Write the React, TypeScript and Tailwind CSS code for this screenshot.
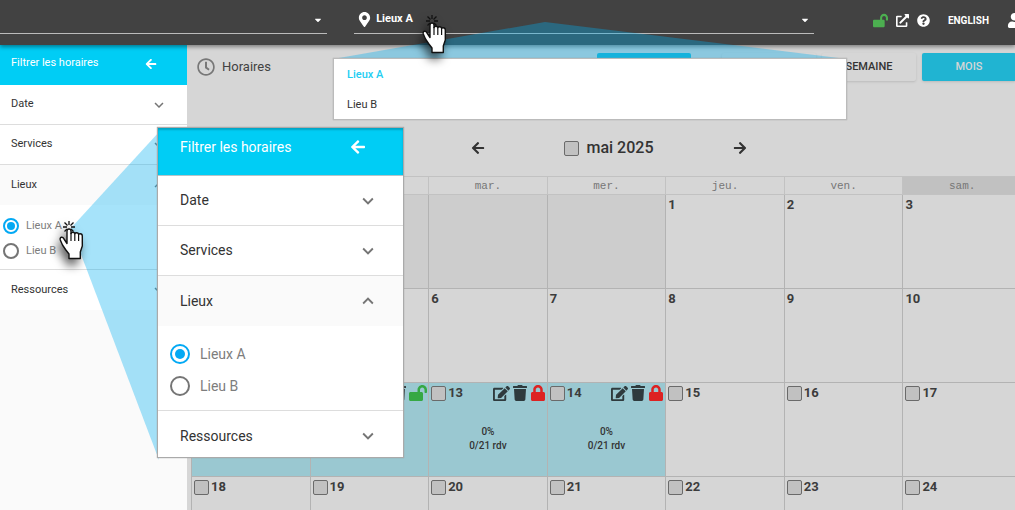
import React from 'react'
import clsx from 'clsx'
import {
  FaArrowLeft,
  FaArrowRight,
  FaCaretDown,
  FaEdit,
  FaExternalLinkAlt,
  FaLock,
  FaLockOpen,
  FaMapMarkerAlt,
  FaQuestionCircle,
  FaRegClock,
  FaTrash,
  FaUser,
} from 'react-icons/fa'
import { MdExpandLess, MdExpandMore } from 'react-icons/md'

const weekDays = ['dim.', 'lun.', 'mar.', 'mer.', 'jeu.', 'ven.', 'sam.']

// null = day of the previous month
const weeks: (number | null)[][] = [
  [null, null, null, null, 1, 2, 3],
  [4, 5, 6, 7, 8, 9, 10],
  [11, 12, 13, 14, 15, 16, 17],
  [18, 19, 20, 21, 22, 23, 24],
]

// days lying under the enlarged panel, their number is not shown
const coveredDays = [4, 5, 11, 12]

const places = ['Lieux A', 'Lieu B']

interface FilterPanelProps {
  name: string
  large?: boolean
}

const FilterPanel: React.FC<FilterPanelProps> = ({ name, large }) => {
  const section = (label: string, open = false) => {
    const Chevron = open ? MdExpandLess : MdExpandMore
    return (
      <button
        type="button"
        aria-expanded={open}
        className={clsx(
          'flex w-full items-center justify-between text-left text-[#333]',
          large ? 'h-[50px] pl-[22px] pr-6' : 'h-10 pl-[11px] pr-[19px]',
          open ? 'bg-[#fafafa]' : 'bg-white'
        )}
      >
        {label}
        <Chevron className={clsx('text-[#757575]', large ? 'size-[22px]' : 'size-[18px]')} />
      </button>
    )
  }

  return (
    <div className={clsx('bg-white', large ? 'text-[14px]' : 'text-[11px]')}>
      <div
        className={clsx(
          'flex items-center justify-between bg-[#00cdf5] text-white',
          large
            ? 'h-12 border-b border-[#b5c4c8] pb-[9px] pl-[22px] pr-[37px] shadow-[inset_0_2px_2px_rgba(0,0,0,0.2)]'
            : 'h-10 pb-[3px] pl-[11px] pr-[30px]'
        )}
      >
        {name}
        <button type="button" aria-label="Fermer">
          <FaArrowLeft className={large ? 'size-4' : 'size-3'} />
        </button>
      </div>
      <div className="divide-y divide-[#ddd]">
        {section('Date')}
        {section('Services')}
        <div>
          {section('Lieux', true)}
          <div className={clsx('flex flex-col', large ? 'gap-3 pt-[18px] pb-[14px] pl-3' : 'gap-[9px] pt-[13px] pb-[10px] pl-[3px]')}>
            {places.map((place, i) => (
              <label
                key={place}
                className={clsx('flex items-center text-[#7d7d7d]', large ? 'h-5 gap-[10px]' : 'h-4 gap-[7px]')}
              >
                <input
                  type="radio"
                  name={large ? 'place-large' : 'place'}
                  defaultChecked={i === 0}
                  className={clsx(
                    'appearance-none rounded-full border-2 border-[#757575] bg-clip-content checked:border-[#03a9f4] checked:bg-[#03a9f4]',
                    large ? 'size-5 p-[3px]' : 'size-4 p-[2px]'
                  )}
                />
                {place}
              </label>
            ))}
          </div>
        </div>
        {section('Ressources')}
      </div>
    </div>
  )
}

interface HandProps {
  className: string
}

const Hand: React.FC<HandProps> = ({ className }) => (
  <svg
    viewBox="0 0 26 40"
    className={clsx('absolute h-10 w-[26px] overflow-visible drop-shadow-[-3px_6px_5px_rgba(0,0,0,0.6)]', className)}
  >
    <path d="M11 1v4M6.500 2.500l3 3M15.500 2.500l-3 3M5 7h4M13 7h4M6.500 11.500l2.500-2.500M15.500 11.500l-2.500-2.500" stroke="#111" strokeWidth="1.300" fill="none" />
    <path
      d="M9 23.500V11q0-2 2-2t2 2v2.500q.3-1.300 1.900-1.300t1.900 1.500q.3-1 1.900-1t1.900 1.800q.3-.8 1.700-.8 2 0 2 2.300V26l-2 6v6.500H11V34l-3.500-4.500L4.500 25 2.300 20q-.6-2.300 1-2.700 1.700-.4 2.700 1.700z"
      fill="#fff"
      stroke="#111"
      strokeWidth="1.400"
      strokeLinejoin="round"
    />
    <path d="M13 13v8M16.800 14v7M20.600 15v6" stroke="#111" strokeWidth="1.200" fill="none" />
  </svg>
)

const Box: React.FC<{ label: string }> = ({ label }) => (
  <input
    type="checkbox"
    aria-label={label}
    className="size-[15px] shrink-0 appearance-none rounded-xs border border-[#6a6a6a] bg-[#c1c1c1]"
  />
)

const DayCell: React.FC<{ day: number | null }> = ({ day }) => {
  const booked = day !== null && day >= 11 && day <= 14
  return (
    <td
      className={clsx(
        'border border-[#b3b3b3] p-0 align-top',
        booked ? 'bg-[#9ac8d1]' : day === null ? 'bg-[#cdcdcd]' : 'bg-[#d6d6d6]'
      )}
    >
      {day !== null && (
        <div className="flex h-5 items-center gap-[2px] pl-[2px] text-[13px] leading-5 font-bold text-[#3c3c3c]">
          {day > 10 && <Box label={`${day} mai`} />}
          {!coveredDays.includes(day) && <span>{day}</span>}
          {booked && (
            <span className="ml-auto flex gap-[2px] pr-px text-[#2f3a3d]">
              <button type="button" aria-label="Modifier"><FaEdit className="size-[17px]" /></button>
              <button type="button" aria-label="Supprimer"><FaTrash className="size-4" /></button>
              <button type="button" aria-label="Verrou">
                {day > 12 ? <FaLock className="size-4 text-[#dd2222]" /> : <FaLockOpen className="h-4 w-[18px] text-[#36a844]" />}
              </button>
            </span>
          )}
        </div>
      )}
      {booked && !coveredDays.includes(day) && (
        <p className="pt-[22px] text-center text-[10px] leading-[14px] font-medium text-[#333]">
          0%
          <br />
          0/21 rdv
        </p>
      )}
    </td>
  )
}

export default function App() {
  return (
    <div className="relative flex h-screen flex-col overflow-hidden bg-[#d6d6d6] font-['Roboto',sans-serif] text-[#333]">
      <header className="z-10 flex h-[45px] shrink-0 items-start bg-[#424242] text-white shadow-[0_2px_4px_rgba(0,0,0,0.4)]">
        <div className="relative mr-[27px] flex h-[34px] flex-[328] items-center border-b border-[#bbb] pt-[6px]">
          <select aria-label="Organisation" className="w-full appearance-none outline-none" />
          <FaCaretDown className="pointer-events-none absolute right-[4px] size-[10px]" />
        </div>
        <div className="relative mr-[59px] flex h-[34px] flex-[458] items-center border-b border-[#bbb] pt-[6px] pl-[3px]">
          <FaMapMarkerAlt className="size-[15px] shrink-0" />
          <select aria-label="Lieu" className="ml-1 w-full appearance-none text-[11px] font-bold outline-none">
            <option>Lieux A</option>
            <option>Lieu B</option>
          </select>
          <FaCaretDown className="pointer-events-none absolute right-[4px] size-[10px]" />
        </div>
        <div className="-mr-[7px] flex h-10 shrink-0 items-center gap-2">
          <FaLockOpen className="size-[15px] text-[#4caf50]" />
          <FaExternalLinkAlt className="size-[13px]" />
          <FaQuestionCircle className="size-[13px]" />
          <button type="button" className="mx-[10px] text-[10px] font-bold">ENGLISH</button>
          <FaUser className="size-[15px]" />
        </div>
      </header>

      <div className="flex min-h-0 flex-1">
        <aside className="w-[187px] shrink-0 bg-[#fafafa]">
          <FilterPanel name="Filtrer les horaires" />
        </aside>

        <main className="min-w-0 flex-1 overflow-hidden">
          <div className="flex h-[75px] items-start pt-2 pl-[10px]">
            <h1 className="flex h-7 flex-1 items-center gap-[7px] text-[13px] text-[#424242]">
              <FaRegClock className="size-[18px] text-[#777]" />
              Horaires
            </h1>
            <div className="-mr-px flex gap-[6px] text-[11px] font-medium">
              <button type="button" aria-label="Aujourd’hui" className="mr-[25px] h-7 w-[94px] rounded-xs bg-[#20b4d2]" />
              <button type="button" aria-label="Jour" className="h-7 w-[94px] rounded-xs bg-[#d6d6d6] shadow" />
              <button type="button" className="h-7 w-[94px] rounded-xs bg-[#d6d6d6] shadow">SEMAINE</button>
              <button type="button" className="h-7 w-[94px] rounded-xs bg-[#20b4d2] text-[#d6d6d6] shadow">MOIS</button>
            </div>
          </div>

          <div className="flex h-14 items-center justify-center gap-[79px] pl-[15px]">
            <button type="button" aria-label="Mois précédent"><FaArrowLeft className="size-[14px]" /></button>
            <label className="flex items-center gap-2 text-[16px] font-medium">
              <Box label="mai 2025" />
              mai 2025
            </label>
            <button type="button" aria-label="Mois suivant"><FaArrowRight className="size-[14px]" /></button>
          </div>

          <div className="-mr-[7px] pl-1">
            <table className="w-full table-fixed border-collapse">
              <thead>
                <tr className="h-[18px] font-['Liberation_Mono',monospace] text-[11px] text-[#777]">
                  {weekDays.map((d, i) => (
                    <th key={d} className={clsx('border border-[#c2c2c2] p-0 leading-4 font-normal', i === 6 && 'bg-[#c1c1c1]')}>
                      {d}
                    </th>
                  ))}
                </tr>
              </thead>
              <tbody>
                {weeks.map((week, i) => (
                  <tr key={i} className="h-[94px]">
                    {week.map((day, j) => <DayCell key={j} day={day} />)}
                  </tr>
                ))}
              </tbody>
            </table>
          </div>
        </main>
      </div>

      {/* callout beams */}
      <svg className="pointer-events-none absolute top-0 left-0 z-20 h-[510px] w-[1015px]" fill="#00aff0" fillOpacity="0.350">
        <path d="M545 22L847 59H333z" />
        <path d="M71 228L159 132V460z" />
      </svg>

      <ul className="absolute top-[58px] left-[333px] z-30 w-[514px] border border-[#bbb] bg-white text-[11px] shadow-[0_0_1px_#999]">
        <li className="flex h-[30px] items-center pt-[2px] pl-[13px] font-medium text-[#22cdf2]">Lieux A</li>
        <li className="flex h-[30px] items-center pt-[2px] pl-[13px]">Lieu B</li>
      </ul>

      <div className="absolute top-[127px] left-[157px] z-30 h-[331px] w-[247px] overflow-hidden border border-[#aaa] shadow-[0_0_1px_#999]">
        <FilterPanel name="Filtrer les horaires" large />
      </div>

      <Hand className="top-[14px] left-[421px] z-40" />
      <Hand className="top-[220px] left-[58px] z-40" />
    </div>
  )
}
